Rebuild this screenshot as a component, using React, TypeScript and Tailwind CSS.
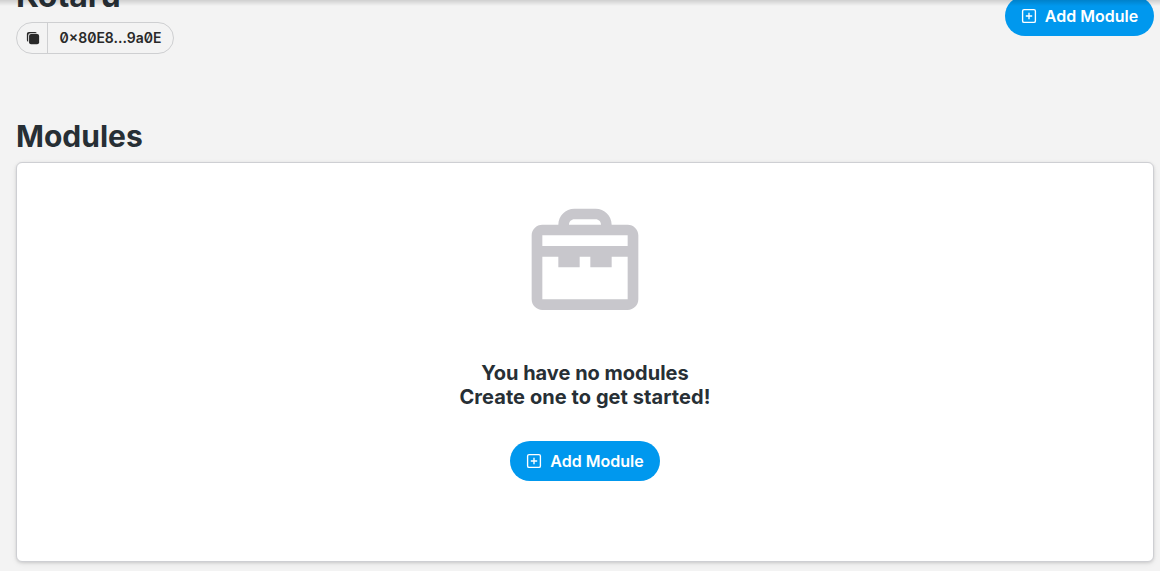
import React from "react";
import { IoCopy } from "react-icons/io5";

function AddModuleButton({ className = "w-[150px]" }: { className?: string }) {
  return (
    <button className={`flex h-10 items-center justify-center gap-2 rounded-full bg-[#0098ee] text-base font-semibold text-white ${className}`}>
      <svg className="size-4" viewBox="0 0 16 16" fill="none" stroke="currentColor" strokeWidth="1.35">
        <rect x="1.6" y="1.6" width="12.8" height="12.8" rx="1.5" />
        <path d="M8 4.8v6.4M4.8 8h6.4" />
      </svg>
      <span>Add Module</span>
    </button>
  );
}

function ToolboxIcon() {
  return (
    <svg className="size-32" viewBox="0 0 24 24" fill="#c8c7cc" fillRule="evenodd">
      <path d="M20 5h-3c0-1.65-1.35-3-3-3h-4C8.35 2 7 3.35 7 5H4c-1.1 0-2 .9-2 2v12c0 1.1.9 2 2 2h16c1.1 0 2-.9 2-2V7c0-1.1-.9-2-2-2ZM10 4h4c.55 0 1 .45 1 1H9c0-.55.45-1 1-1ZM4 7h16v2H4ZM4 11h3v2h4v-2h2v2h4v-2h3v8H4Z" />
    </svg>
  );
}

export default function App() {
  return (
    <main className="relative h-[571px] overflow-hidden bg-[#f3f3f3] pl-4 pr-[6px] font-['Inter',sans-serif] text-[#272f35]">
      <header className="flex h-[114px] items-start justify-between">
        <div className="-mt-[22px]">
          <h1 className="h-11 text-[32px] leading-[36px] font-bold">Kotaru</h1>
          <div className="flex h-8 w-[158px] items-center rounded-full border border-[#cecfd1] text-[#292929]">
            <button className="flex h-full w-[31px] items-center justify-center border-r border-[#cecfd1] pl-0.5">
              <IoCopy className="size-3.5" />
            </button>
            <span className="flex-1 text-center text-sm font-semibold [font-feature-settings:'zero']">0×80E8...9a0E</span>
          </div>
        </div>
        <div className="-mt-1">
          <AddModuleButton className="w-[149px]" />
        </div>
      </header>
      <h2 className="h-12 pt-1 text-[30px] leading-[36px] font-bold">Modules</h2>
      <section className="flex h-[400px] flex-col items-center rounded-md border border-[#cecfd3] bg-white pt-[34.5px] shadow-[0_1px_3px_rgba(0,0,0,0.12),0_2px_6px_rgba(0,0,0,0.06)]">
        <ToolboxIcon />
        <p className="mt-[35.5px] text-center text-xl leading-6 font-bold">
          You have no modules
          <br />
          <span className="tracking-[0.07px]">Create one to get started!</span>
        </p>
        <div className="mt-8">
          <AddModuleButton />
        </div>
      </section>
      <div className="pointer-events-none absolute inset-x-0 top-0 h-1.5 bg-linear-to-b from-black/15 to-transparent" />
    </main>
  );
}
